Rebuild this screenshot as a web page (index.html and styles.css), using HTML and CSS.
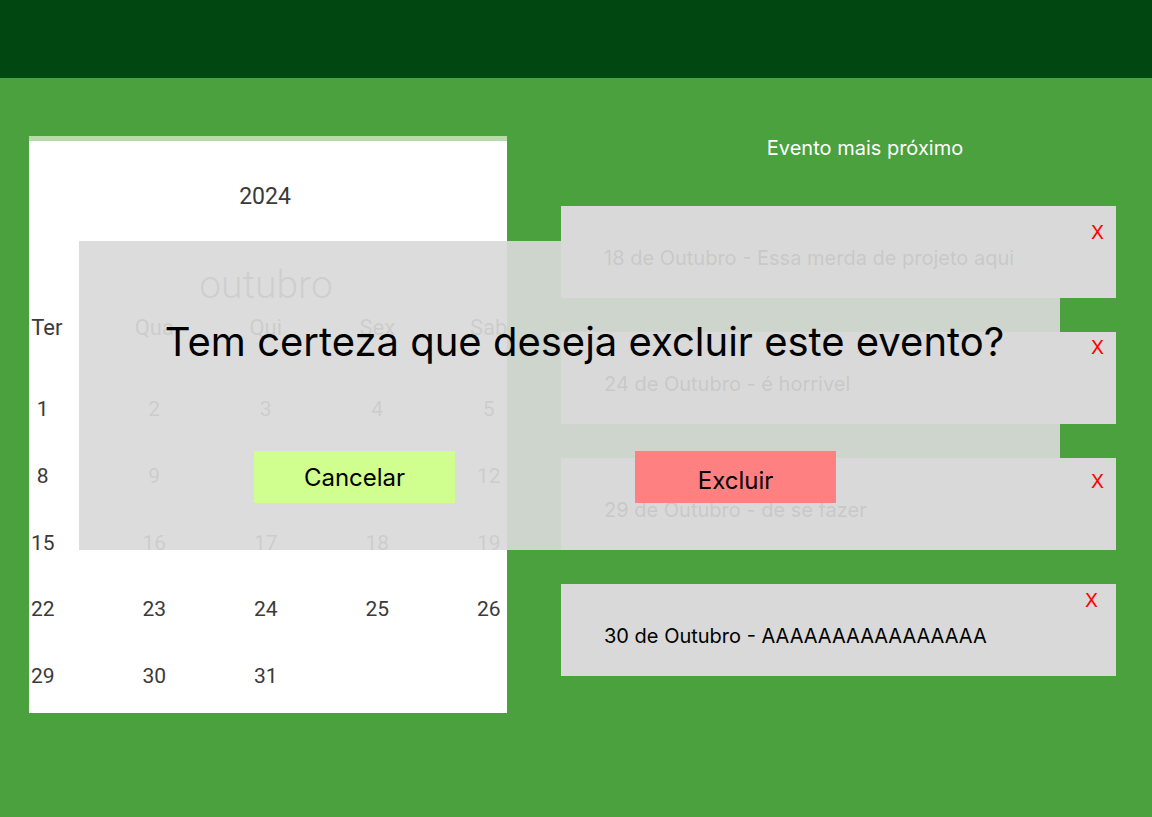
FILE: index.html
```html
<!DOCTYPE html>
<html lang="pt-BR">
<head>
<meta charset="utf-8">
<title>Calendário</title>
<link rel="stylesheet" href="styles.css">
</head>
<body>
<header class="topbar"></header>
<main class="content">
  <section class="calendar">
    <div class="cal-year">2024</div>
    <div class="cal-month">outubro</div>
    <div class="cal-grid cal-head">
      <span>Ter</span><span>Qua</span><span>Qui</span><span>Sex</span><span>Sab</span>
    </div>
    <div class="cal-grid cal-days">
      <span>1</span><span>2</span><span>3</span><span>4</span><span>5</span>
      <span>8</span><span>9</span><span>10</span><span>11</span><span>12</span>
      <span>15</span><span>16</span><span>17</span><span>18</span><span>19</span>
      <span>22</span><span>23</span><span>24</span><span>25</span><span>26</span>
      <span>29</span><span>30</span><span>31</span><span></span><span></span>
    </div>
  </section>
  <section class="events">
    <h2 class="events-title">Evento mais próximo</h2>
    <div class="event-list">
      <div class="event event-1"><div class="event-x">X</div><div class="event-text">18 de Outubro - Essa merda de projeto aqui</div></div>
      <div class="event event-2"><div class="event-x">X</div><div class="event-text">24 de Outubro - é horrivel</div></div>
      <div class="event event-3"><div class="event-x">X</div><div class="event-text">29 de Outubro - de se fazer</div></div>
      <div class="event event-4"><div class="event-x">X</div><div class="event-text">30 de Outubro - AAAAAAAAAAAAAAAA</div></div>
    </div>
  </section>
</main>
<div class="modal">
  <p class="modal-title">Tem certeza que deseja excluir este evento?</p>
  <div class="modal-actions">
    <button class="btn btn-cancel">Cancelar</button>
    <button class="btn btn-delete">Excluir</button>
  </div>
</div>
</body>
</html>
```

FILE: styles.css
```css
* { box-sizing: border-box; }
html, body { margin: 0; padding: 0; }
body {
  background: #4ba13e;
  font-family: "Inter", "Roboto", sans-serif;
  width: 1152px;
  height: 817px;
  overflow: hidden;
  position: relative;
}
.topbar {
  height: 78px;
  background: #004712;
}
.content {
  display: flex;
  align-items: flex-start;
  padding: 58px 0 0 29px;
}
.calendar {
  width: 478px;
  height: 577px;
  background: #fff;
  border-top: 5px solid #b6dca9;
  overflow: hidden;
  font-family: "Roboto", sans-serif;
  color: #3a3a3a;
}
.cal-year {
  margin-top: 42px;
  text-align: center;
  font-size: 23px;
  line-height: 28px;
  padding-right: 6px;
}
.cal-month {
  margin-top: 52px;
  text-align: center;
  font-size: 39px;
  font-weight: 300;
  line-height: 44px;
  color: #555;
  padding-right: 4px;
}
.cal-grid {
  display: grid;
  grid-template-columns: repeat(5, 111.5px);
  margin-left: -42px;
  width: 557.5px;
  text-align: center;
}
.cal-head {
  margin-top: 8px;
  font-size: 22px;
  line-height: 26px;
}
.cal-head span:first-child { padding-left: 8px; }
.cal-days {
  padding-top: 35px;
  grid-auto-rows: 66.8px;
  font-size: 21px;
  line-height: 66.8px;
}
.events {
  margin-left: 54px;
  width: 555px;
}
.events-title {
  margin: 0;
  font-size: 20px;
  font-weight: 400;
  line-height: 24px;
  color: #fff;
  text-align: center;
  padding-left: 53px;
}
.event-list {
  margin-top: 46px;
  display: flex;
  flex-direction: column;
  gap: 34px;
}
.event {
  height: 92px;
  background: #d9d9d9;
  padding: 0 12px 0 43px;
}
.event-x {
  display: flex;
  justify-content: flex-end;
  color: #ff0000;
  font-size: 19px;
  line-height: 24px;
  height: 24px;
}
.event-1 .event-x { margin-top: 15px; }
.event-2 .event-x { margin-top: 4px; }
.event-3 .event-x { margin-top: 12px; }
.event-4 .event-x { margin-top: 5px; padding-right: 6px; }
.event-text {
  font-size: 20px;
  line-height: 24px;
  color: #000;
}
.event-1 .event-text { margin-top: 1px; }
.event-2 .event-text { margin-top: 12px; }
.event-3 .event-text { margin-top: 4px; }
.event-4 .event-text { margin-top: 11px; }
.modal {
  position: absolute;
  left: 79px;
  top: 241px;
  width: 981px;
  height: 309px;
  background: rgba(217, 217, 217, 0.92);
}
.modal-title {
  margin: 77px 0 0;
  padding-left: 30px;
  text-align: center;
  font-size: 40px;
  line-height: 48px;
  color: #000;
}
.modal-actions {
  display: flex;
  gap: 180px;
  margin-top: 85px;
  padding-left: 175px;
}
.btn {
  border: none;
  width: 201px;
  height: 52px;
  font-family: "Inter", sans-serif;
  font-size: 24px;
  color: #000;
  padding: 0;
}
.btn-cancel { background: #d1ff8f; }
.btn-delete { background: #ff8080; padding-top: 6px; }
```
